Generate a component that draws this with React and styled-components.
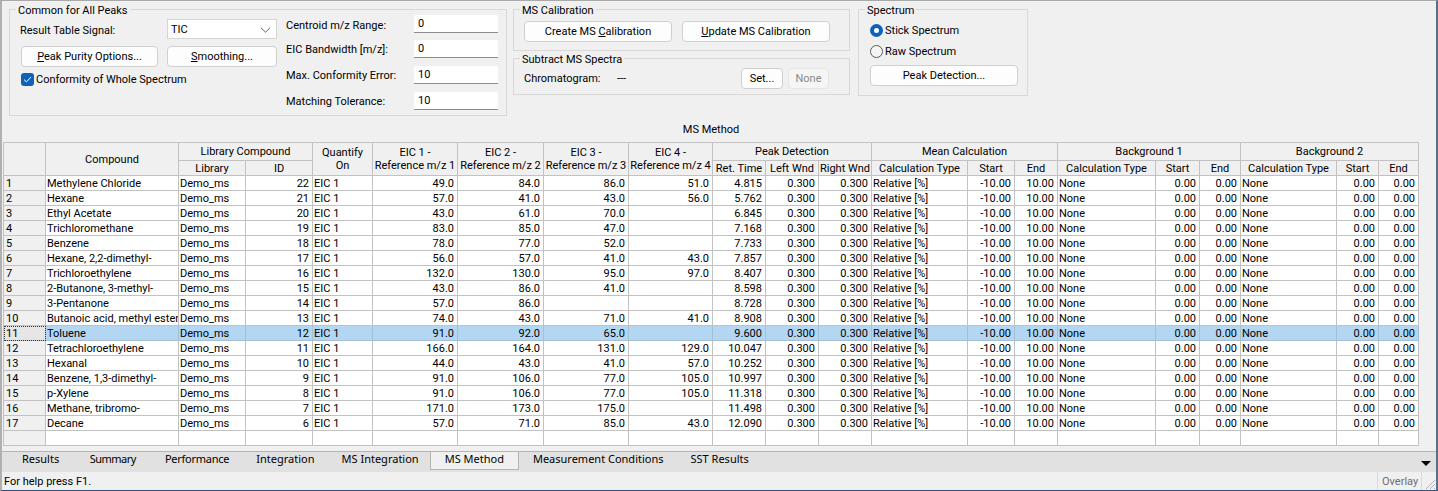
import React from "react";
import styled, { createGlobalStyle } from "styled-components";

const GlobalStyle = createGlobalStyle`
  html, body {
    margin: 0;
    padding: 0;
    background: #f0f0f0;
    overflow: hidden;
  }
  * {
    box-sizing: border-box;
  }
`;

const Window = styled.div`
  width: 1438px;
  height: 491px;
  display: flex;
  flex-direction: column;
  background: #f0f0f0;
  color: #000;
  font-family: Roboto, "Noto Sans", sans-serif;
  font-size: 11px;
  border-top: 1px solid #a9a9a9;
  border-left: 2px solid #b0b0b0;
  border-right: 2px solid #5a6e8c;
  border-bottom: 1px solid #2f4f7f;
`;

const TopRow = styled.div`
  display: flex;
  align-items: flex-start;
  gap: 6px;
  padding: 8px 0 0 7px;
`;

const Group = styled.section`
  position: relative;
  width: ${props => props.$width}px;
  height: ${props => props.$height}px;
  margin-left: ${props => props.$shift || 0}px;
  border: 1px solid #d8d8d8;
`;

const GroupTitle = styled.span`
  position: absolute;
  top: -7px;
  left: 6px;
  padding: 0 2px;
  line-height: 16px;
  background: #f0f0f0;
`;

const CommonBody = styled.div`
  display: flex;
  padding: 5px 8px 0 10px;
`;

const LeftColumn = styled.div`
  width: 266px;
  padding-top: 4px;
`;

const SignalRow = styled.div`
  display: flex;
  align-items: center;
  justify-content: space-between;
  width: 257px;
  height: 20px;
`;

const SignalLabel = styled.span`
  padding-top: 2px;
`;

const Select = styled.div`
  display: flex;
  align-items: center;
  justify-content: space-between;
  width: 110px;
  height: 20px;
  padding: 1px 5px 0 3px;
  background: #fff;
  border: 1px solid #d4d4d4;
`;

const ButtonRow = styled.div`
  display: flex;
  justify-content: space-between;
  width: 256px;
  margin: 7px 0 0 1px;
`;

const Button = styled.button`
  width: ${props => props.$width}px;
  height: ${props => props.$height || 21}px;
  padding: 0 0 1px;
  font: inherit;
  color: ${props => (props.disabled ? "#8a8a8a" : "#000")};
  background: ${props => (props.disabled ? "#f5f5f5" : "#fdfdfd")};
  border: 1px solid ${props => (props.disabled ? "#e6e6e6" : "#cfcfcf")};
  border-radius: 4px;
`;

const CheckRow = styled.label`
  display: flex;
  align-items: center;
  gap: 2px;
  margin: 6px 0 0 1px;
`;

const CheckBox = styled.span`
  display: flex;
  align-items: center;
  justify-content: center;
  width: 13px;
  height: 13px;
  background: #0f62b8;
  border-radius: 3px;
`;

const FieldGrid = styled.div`
  display: grid;
  grid-template-columns: 128px 84px;
  grid-template-rows: 25px 26px 26px 18px;
  align-items: start;
`;

const FieldLabel = styled.span`
  line-height: 20px;
  &:first-child {
    padding-top: 1px;
  }
`;

const Input = styled.input`
  width: 84px;
  height: 18px;
  padding: 0 4px;
  font: inherit;
  background: #fff;
  border: 0;
  border-bottom: 1px solid #8c8c8c;
  border-radius: 2px 2px 0 0;
  outline: none;
`;

const MiddleColumn = styled.div`
  display: flex;
  flex-direction: column;
  gap: 7px;
`;

const CalibrationBody = styled.div`
  display: flex;
  gap: 10px;
  padding: 11px 0 0 10px;
`;

const SubtractBody = styled.div`
  display: flex;
  align-items: center;
  padding: 9px 0 0 10px;
`;

const ChromLabel = styled.span`
  width: 93px;
`;

const ChromValue = styled.span`
  width: 124px;
`;

const SubtractButtons = styled.div`
  display: flex;
  gap: 5px;
`;

const SpectrumBody = styled.div`
  display: flex;
  flex-direction: column;
  padding: 13px 0 0 11px;
`;

const RadioRow = styled.label`
  display: flex;
  align-items: center;
  gap: 2px;
  height: 14px;
  margin-bottom: 7px;
`;

const Radio = styled.span`
  width: 13px;
  height: 13px;
  border-radius: 50%;
  background: ${props => (props.$on ? "#fff" : "#f5f5f5")};
  border: ${props => (props.$on ? "4px solid #0f62b8" : "1px solid #5c5c5c")};
`;

const SectionTitle = styled.div`
  width: 1416px;
  margin: 6px 0 0 1px;
  height: 20px;
  line-height: 16px;
  text-align: center;
`;

const TableArea = styled.div`
  flex: 1;
  padding-left: 1px;
`;

const Table = styled.table`
  width: 1416px;
  table-layout: fixed;
  border-collapse: collapse;
  background: #fff;
`;

const HeadCell = styled.th`
  height: ${props => props.$height || 15}px;
  padding: 0 0 ${props => (props.$band ? 1 : 0)}px;
  font-weight: 400;
  line-height: 13px;
  text-align: center;
  white-space: nowrap;
  overflow: hidden;
  background: #f0f0f0;
  border: 1px solid #c2c2c2;
`;

const RowHead = styled.td`
  height: 15px;
  padding: 1px 0 0 2px;
  line-height: 12px;
  background: ${props => (props.$focused ? "#e6e6e6" : "#f0f0f0")};
  border: 1px solid #c2c2c2;
  ${props => (props.$focused ? "outline: 1px dotted #333; outline-offset: -1px;" : "")}
`;

const Cell = styled.td`
  height: 15px;
  padding: ${props => (props.$num ? "1px 3px 0 0" : "1px 0 0 1px")};
  line-height: 12px;
  text-align: ${props => (props.$num ? "right" : "left")};
  white-space: nowrap;
  overflow: hidden;
  background: ${props => (props.$selected ? "#b3d7f3" : "#fff")};
  border: 1px solid ${props => (props.$selected ? "#a6bfd4" : "#c2c2c2")};
`;

const TabBar = styled.div`
  display: flex;
  align-items: flex-start;
  height: 21px;
  padding-left: 6px;
  font-family: "Noto Sans", sans-serif;
  background: #e1e1e1;
  border-top: 1px solid #b4b4b4;
`;

const Tab = styled.div`
  height: ${props => (props.$active ? 18 : 17)}px;
  padding: 0 ${props => props.$right}px 0 ${props => props.$left}px;
  line-height: 14px;
  letter-spacing: ${props => props.$spacing || 0}px;
  background: ${props => (props.$active ? "#f0f0f0" : "transparent")};
  border-left: 1px solid ${props => (props.$active ? "#b4b4b4" : "transparent")};
  border-right: 1px solid ${props => (props.$active ? "#b4b4b4" : "transparent")};
  border-bottom: ${props => (props.$active ? "1px solid #b4b4b4" : "0")};
`;

const TabArrow = styled.svg`
  margin: 9px 5px 0 auto;
`;

const StatusBar = styled.div`
  display: flex;
  align-items: center;
  height: 18px;
  padding-left: 2px;
`;

const StatusText = styled.span`
  flex: 1;
`;

const StatusPanel = styled.span`
  width: 45px;
  height: 18px;
  padding-left: 4px;
  line-height: 19px;
  color: #6d6d6d;
  border-left: 1px solid #d9d9d9;
  border-right: 1px solid #d9d9d9;
`;

const Grip = styled.svg`
  width: 14px;
  height: 18px;
`;

const columns = [42, 133, 67, 67, 60, 85, 86, 85, 84, 53, 53, 53, 96, 47, 43, 98, 44, 41, 96, 42, 40];

const compounds = [
  ["Methylene Chloride", 22, "49.0", "84.0", "86.0", "51.0", "4.815"],
  ["Hexane", 21, "57.0", "41.0", "43.0", "56.0", "5.762"],
  ["Ethyl Acetate", 20, "43.0", "61.0", "70.0", "", "6.845"],
  ["Trichloromethane", 19, "83.0", "85.0", "47.0", "", "7.168"],
  ["Benzene", 18, "78.0", "77.0", "52.0", "", "7.733"],
  ["Hexane, 2,2-dimethyl-", 17, "56.0", "57.0", "41.0", "43.0", "7.857"],
  ["Trichloroethylene", 16, "132.0", "130.0", "95.0", "97.0", "8.407"],
  ["2-Butanone, 3-methyl-", 15, "43.0", "86.0", "41.0", "", "8.598"],
  ["3-Pentanone", 14, "57.0", "86.0", "", "", "8.728"],
  ["Butanoic acid, methyl ester", 13, "74.0", "43.0", "71.0", "41.0", "8.908"],
  ["Toluene", 12, "91.0", "92.0", "65.0", "", "9.600"],
  ["Tetrachloroethylene", 11, "166.0", "164.0", "131.0", "129.0", "10.047"],
  ["Hexanal", 10, "44.0", "43.0", "41.0", "57.0", "10.252"],
  ["Benzene, 1,3-dimethyl-", 9, "91.0", "106.0", "77.0", "105.0", "10.997"],
  ["p-Xylene", 8, "91.0", "106.0", "77.0", "105.0", "11.318"],
  ["Methane, tribromo-", 7, "171.0", "173.0", "175.0", "", "11.498"],
  ["Decane", 6, "57.0", "71.0", "85.0", "43.0", "12.090"]
];

const tabs = [
  { label: "Results", left: 13, right: 16 },
  { label: "Summary", left: 12.5, right: 14.5, spacing: -0.5 },
  { label: "Performance", left: 12.5, right: 12.5, spacing: -0.25 },
  { label: "Integration", left: 12.5, right: 12.5 },
  { label: "MS Integration", left: 12.5, right: 10 },
  { label: "MS Method", left: 14, right: 14.5 },
  { label: "Measurement Conditions", left: 12.5, right: 12.5 },
  { label: "SST Results", left: 12.5, right: 12.5 }
];

const fields = [
  ["Centroid m/z Range:", "0"],
  ["EIC Bandwidth [m/z]:", "0"],
  ["Max. Conformity Error:", "10"],
  ["Matching Tolerance:", "10"]
];

const Row = ({ index, data }) => {
  const selected = index === 11;
  const [name, id, eic1, eic2, eic3, eic4, time] = data;
  const text = [
    [name], ["Demo_ms"], [id, true], ["EIC 1"],
    [eic1, true], [eic2, true], [eic3, true], [eic4, true],
    [time, true], ["0.300", true], ["0.300", true],
    ["Relative [%]"], ["-10.00", true], ["10.00", true],
    ["None"], ["0.00", true], ["0.00", true],
    ["None"], ["0.00", true], ["0.00", true]
  ];
  return (
    <tr>
      <RowHead $focused={selected}>{index}</RowHead>
      {text.map(([value, num], i) => (
        <Cell key={i} $num={num} $selected={selected}>{value}</Cell>
      ))}
    </tr>
  );
};

const App = () => {
  return (
    <Window>
      <GlobalStyle />
      <TopRow>
        <Group $width={498} $height={107}>
          <GroupTitle>Common for All Peaks</GroupTitle>
          <CommonBody>
            <LeftColumn>
              <SignalRow>
                <SignalLabel>Result Table Signal:</SignalLabel>
                <Select>
                  TIC
                  <svg width="11" height="6" viewBox="0 0 11 6">
                    <path d="M1 .8l4.5 4.4L10 .8" fill="none" stroke="#606060" />
                  </svg>
                </Select>
              </SignalRow>
              <ButtonRow>
                <Button $width={137}><u>P</u>eak Purity Options...</Button>
                <Button $width={110}><u>S</u>moothing...</Button>
              </ButtonRow>
              <CheckRow>
                <CheckBox>
                  <svg width="9" height="7" viewBox="0 0 9 7">
                    <path d="M1 3.6l2.4 2.3L8 1" fill="none" stroke="#fff" />
                  </svg>
                </CheckBox>
                Conformity of Whole Spectrum
              </CheckRow>
            </LeftColumn>
            <FieldGrid>
              {fields.map(([label, value]) => (
                <React.Fragment key={label}>
                  <FieldLabel>{label}</FieldLabel>
                  <Input defaultValue={value} />
                </React.Fragment>
              ))}
            </FieldGrid>
          </CommonBody>
        </Group>
        <MiddleColumn>
          <Group $width={337} $height={42}>
            <GroupTitle>MS Calibration</GroupTitle>
            <CalibrationBody>
              <Button $width={148}>Create MS <u>C</u>alibration</Button>
              <Button $width={148}><u>U</u>pdate MS Calibration</Button>
            </CalibrationBody>
          </Group>
          <Group $width={337} $height={37}>
            <GroupTitle>Subtract MS Spectra</GroupTitle>
            <SubtractBody>
              <ChromLabel>Chromatogram:</ChromLabel>
              <ChromValue>---</ChromValue>
              <SubtractButtons>
                <Button $width={42}>Set...</Button>
                <Button $width={41} disabled>None</Button>
              </SubtractButtons>
            </SubtractBody>
          </Group>
        </MiddleColumn>
        <Group $width={170} $height={87} $shift={2}>
          <GroupTitle>Spectrum</GroupTitle>
          <SpectrumBody>
            <RadioRow><Radio $on />Stick Spectrum</RadioRow>
            <RadioRow><Radio />Raw Spectrum</RadioRow>
            <Button $width={148}>Peak Detection...</Button>
          </SpectrumBody>
        </Group>
      </TopRow>
      <SectionTitle>MS Method</SectionTitle>
      <TableArea>
        <Table>
          <colgroup>
            {columns.map((w, i) => <col key={i} width={w} />)}
          </colgroup>
          <thead>
            <tr>
              <HeadCell rowSpan={2} />
              <HeadCell rowSpan={2}>Compound</HeadCell>
              <HeadCell colSpan={2} $height={18} $band>Library Compound</HeadCell>
              <HeadCell rowSpan={2}>Quantify<br />On</HeadCell>
              <HeadCell rowSpan={2}>EIC 1 -<br />Reference m/z 1</HeadCell>
              <HeadCell rowSpan={2}>EIC 2 -<br />Reference m/z 2</HeadCell>
              <HeadCell rowSpan={2}>EIC 3 -<br />Reference m/z 3</HeadCell>
              <HeadCell rowSpan={2}>EIC 4 -<br />Reference m/z 4</HeadCell>
              <HeadCell colSpan={3} $band>Peak Detection</HeadCell>
              <HeadCell colSpan={3} $band>Mean Calculation</HeadCell>
              <HeadCell colSpan={3} $band>Background 1</HeadCell>
              <HeadCell colSpan={3} $band>Background 2</HeadCell>
            </tr>
            <tr>
              <HeadCell>Library</HeadCell>
              <HeadCell>ID</HeadCell>
              <HeadCell>Ret. Time</HeadCell>
              <HeadCell>Left Wnd</HeadCell>
              <HeadCell>Right Wnd</HeadCell>
              <HeadCell>Calculation Type</HeadCell>
              <HeadCell>Start</HeadCell>
              <HeadCell>End</HeadCell>
              <HeadCell>Calculation Type</HeadCell>
              <HeadCell>Start</HeadCell>
              <HeadCell>End</HeadCell>
              <HeadCell>Calculation Type</HeadCell>
              <HeadCell>Start</HeadCell>
              <HeadCell>End</HeadCell>
            </tr>
          </thead>
          <tbody>
            {compounds.map((data, i) => (
              <Row key={data[0]} index={i + 1} data={data} />
            ))}
            <tr>
              <RowHead />
              {columns.slice(1).map((w, i) => <Cell key={i} />)}
            </tr>
          </tbody>
        </Table>
      </TableArea>
      <TabBar>
        {tabs.map(tab => (
          <Tab
            key={tab.label}
            $active={tab.label === "MS Method"}
            $left={tab.left}
            $right={tab.right}
            $spacing={tab.spacing}
          >
            {tab.label}
          </Tab>
        ))}
        <TabArrow width="10" height="5" viewBox="0 0 10 5">
          <path d="M0 0h10L5 5z" fill="#000" />
        </TabArrow>
      </TabBar>
      <StatusBar>
        <StatusText>For help press F1.</StatusText>
        <StatusPanel>Overlay</StatusPanel>
        <Grip viewBox="0 0 14 18">
          <path d="M4 17L13 8M8 17l5-5M12 17l1-1" stroke="#b5b5b5" fill="none" />
        </Grip>
      </StatusBar>
    </Window>
  );
};

export default App;
